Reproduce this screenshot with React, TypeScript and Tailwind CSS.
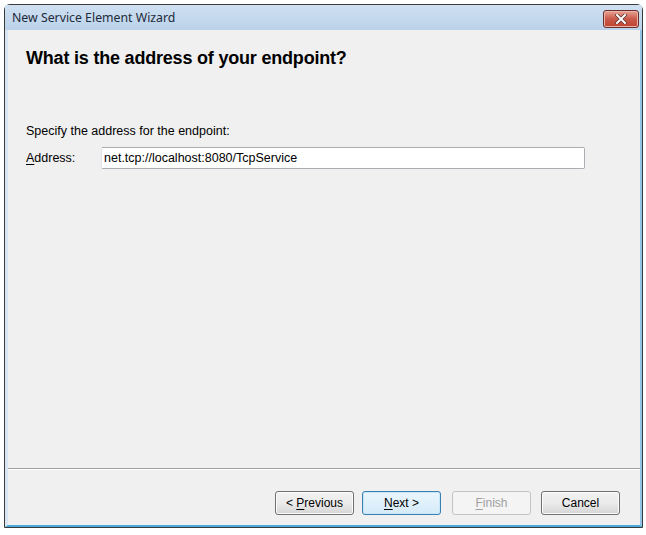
import React from 'react';

const sans = { fontFamily: '"Liberation Sans", Arial, sans-serif' };

interface WizardButtonProps {
  label: string;
  accessKey?: string;
  prefix?: string;
  suffix?: string;
  primary?: boolean;
  disabled?: boolean;
}

const WizardButton = ({ label, accessKey, prefix = '', suffix = '', primary, disabled }: WizardButtonProps) => {
  const rest = accessKey ? label.slice(1) : label;
  return (
    <button
      className={
        'flex h-[24px] w-[79px] items-center justify-center rounded-[3px] border text-[12px] ' +
        (disabled
          ? 'border-[#c4c4c4] bg-[#f4f4f4] text-[#a0a0a0]'
          : primary
            ? 'border-[#3c7fb1] bg-gradient-to-b from-[#eaf6fd] to-[#d4ebf8] text-black shadow-[inset_0_0_0_1px_#c6e6f9]'
            : 'border-[#707070] bg-gradient-to-b from-[#f2f2f2] via-[#ebebeb] to-[#d5d5d5] text-black shadow-[inset_0_0_0_1px_#fcfcfc]')
      }
      style={sans}
    >
      <span className="whitespace-pre">
        {prefix}
        {accessKey && <span className="underline underline-offset-2">{accessKey}</span>}
        {rest}
        {suffix}
      </span>
    </button>
  );
};

const App = () => {
  return (
    <div className="h-[535px] w-[646px] bg-white pl-[4px] pt-[4px]">
      <div className="flex h-[524px] w-[639px] flex-col rounded-t-[6px] border border-[#3a3a3a] bg-[#c3d8ee]">
        <div className="flex h-[25px] items-center justify-between bg-gradient-to-b from-[#cfe0f1] to-[#bad2ea] pl-[7px] pr-[3px]">
          <span className="pt-[2px] text-[12.3px] text-[#1e2a3a]" style={{ fontFamily: '"Noto Sans", "Open Sans", sans-serif' }}>
            New Service Element Wizard
          </span>
          <div className="mt-[3px] flex h-[18px] w-[36px] items-center justify-center rounded-[3px] border border-[#6b2e2a] bg-gradient-to-b from-[#e8a393] via-[#c9594a] to-[#c0432f] shadow-[inset_0_0_0_1px_#e9b3a8]">
            <svg width="12" height="10" viewBox="0 0 12 10">
              <path d="M2 1 L10 9 M10 1 L2 9" stroke="#5a3030" strokeWidth="3.4" strokeLinecap="square" />
              <path d="M2 1 L10 9 M10 1 L2 9" stroke="#ffffff" strokeWidth="2" strokeLinecap="square" />
            </svg>
          </div>
        </div>
        <div className="flex flex-1 flex-col border-b-[2px] border-l-[3px] border-r-[2px] border-b-[#4ba9dc] border-l-[#d8e5f3] border-r-[#93c3e6] bg-[#f0f0f0]">
          <div className="flex flex-1 flex-col pl-[18px] pt-[17px]" style={sans}>
            <h1 className="text-[18px] leading-[22px] font-bold tracking-[-0.2px] text-black">
              What is the address of your endpoint?
            </h1>
            <p className="mt-[55px] text-[12.5px] leading-[15px] text-black">Specify the address for the endpoint:</p>
            <div className="mt-[8px] flex items-center">
              <label className="w-[75px] text-[12.5px] text-black">
                <span className="underline underline-offset-2">A</span>ddress:
              </label>
              <div className="flex h-[22px] w-[484px] items-center rounded-[2px] border border-[#abadb3] border-l-[#e2e3ea] border-t-[#abadb3] bg-white pl-[2px] text-[12.5px] text-black">
                net.tcp://localhost:8080/TcpService
              </div>
            </div>
          </div>
          <div className="h-[2px] border-b border-t border-b-white border-t-[#a0a0a0]" />
          <div className="flex justify-end pb-[10px] pr-[20px] pt-[21px]">
            <WizardButton label="Previous" prefix="< " accessKey="P" />
            <div className="w-[8px]" />
            <WizardButton label="Next" suffix=" >" accessKey="N" primary />
            <div className="w-[11px]" />
            <WizardButton label="Finish" accessKey="F" disabled />
            <div className="w-[10px]" />
            <WizardButton label="Cancel" />
          </div>
        </div>
      </div>
    </div>
  );
};

export default App;
